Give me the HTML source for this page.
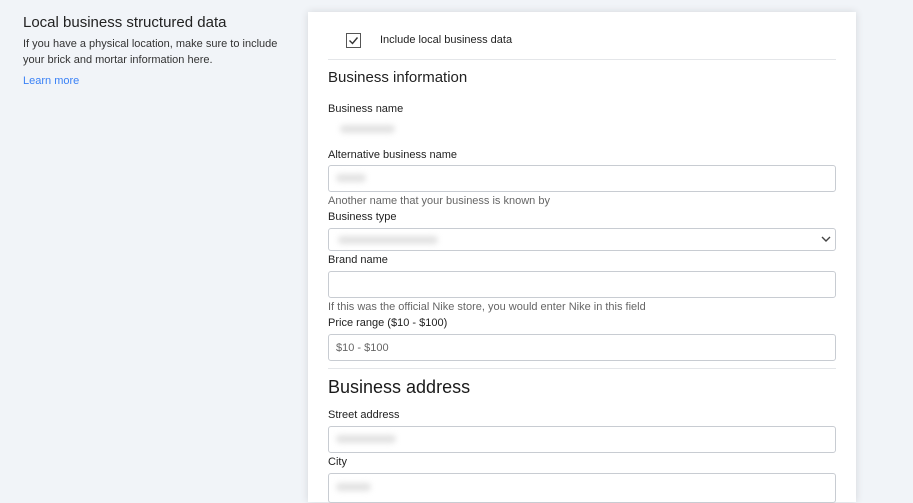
<!DOCTYPE html>
<html><head><meta charset="utf-8"><style>
*{margin:0;padding:0;box-sizing:border-box}
body{width:913px;height:493px;overflow:hidden;background:#f1f4f8;font-family:"Liberation Sans",sans-serif;color:#1e1e1e;position:relative}
.a{position:absolute;white-space:nowrap}
.t{margin-top:1px}
.card{position:absolute;left:308px;top:12px;width:548px;height:490px;background:#fff;box-shadow:0 0 8px rgba(0,0,0,.12)}
.lbl{font-size:11px;color:#222;margin-top:1px}
.help{font-size:11px;color:#666;margin-top:1px}
.inp{position:absolute;left:328px;width:508px;height:27px;border:1px solid #c8ccd2;border-radius:3px;background:#fff}
.hr{position:absolute;left:328px;width:508px;height:1px;background:#e4e6e9}
.blur{position:absolute;height:8px;border-radius:4px;background:#e2e2e2;filter:blur(3px)}
</style></head><body>
<div class="a" style="left:23px;top:14px;font-size:15px;color:#222">Local business structured data</div>
<div class="a" style="left:23px;top:36px;font-size:11px;line-height:16px;color:#333">If you have a physical location, make sure to include<br>your brick and mortar information here.</div>
<div class="a" style="left:23px;top:75px;font-size:11px;color:#3b82f6">Learn more</div>
<div class="card"></div>
<div style="position:absolute;left:346px;top:33px;width:15px;height:15px;border:1px solid #555"></div>
<svg class="a" style="left:346px;top:33px" width="15" height="15"><path d="M3.5 7.5 L6.5 10.5 L11.5 4.5" fill="none" stroke="#333" stroke-width="1.4"/></svg>
<div class="a lbl" style="left:380px;top:33px">Include local business data</div>
<div class="hr" style="top:59px"></div>
<div class="a" style="left:328px;top:69px;font-size:15px;color:#222">Business information</div>
<div class="a lbl" style="left:328px;top:102px">Business name</div>
<div class="blur" style="left:340px;top:125px;width:55px"></div>
<div class="a lbl" style="left:328px;top:148px">Alternative business name</div>
<div class="inp" style="top:165px"></div>
<div class="blur" style="left:336px;top:174px;width:30px"></div>
<div class="a help" style="left:328px;top:194px">Another name that your business is known by</div>
<div class="a lbl" style="left:328px;top:210px">Business type</div>
<div class="inp" style="top:228px;height:23px"></div>
<div class="blur" style="left:338px;top:236px;width:100px"></div>
<svg class="a" style="left:820px;top:234px" width="12" height="10"><path d="M2 3 L6 7 L10 3" fill="none" stroke="#444" stroke-width="1.4"/></svg>
<div class="a lbl" style="left:328px;top:253px">Brand name</div>
<div class="inp" style="top:271px"></div>
<div class="a help" style="left:328px;top:300px">If this was the official Nike store, you would enter Nike in this field</div>
<div class="a lbl" style="left:328px;top:316px">Price range ($10 - $100)</div>
<div class="inp" style="top:334px"></div>
<div class="a" style="left:336px;top:342px;font-size:11px;color:#666">$10 - $100</div>
<div class="hr" style="top:368px"></div>
<div class="a" style="left:328px;top:377px;font-size:18px;color:#1a1a1a">Business address</div>
<div class="a lbl" style="left:328px;top:408px">Street address</div>
<div class="inp" style="top:426px"></div>
<div class="blur" style="left:336px;top:435px;width:60px"></div>
<div class="a lbl" style="left:328px;top:455px">City</div>
<div class="inp" style="top:473px;height:30px"></div>
<div class="blur" style="left:336px;top:483px;width:35px"></div>
</body></html>
